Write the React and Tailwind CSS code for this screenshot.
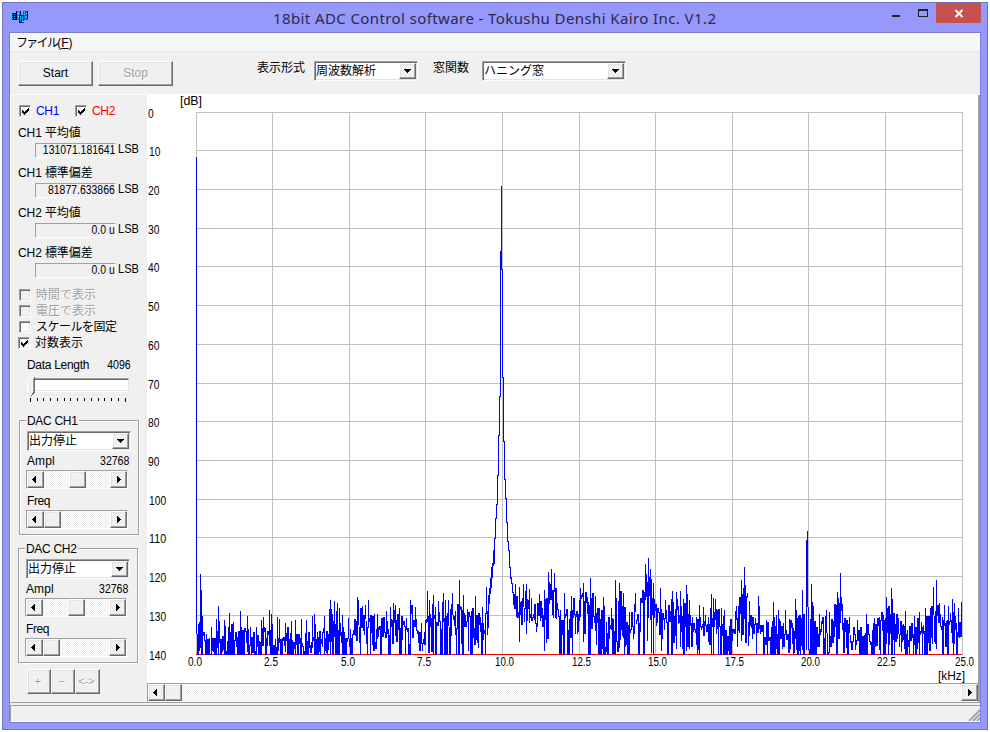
import React from "react";

const H_LINES = [112, 150, 189, 228, 266, 305, 344, 383, 421, 460, 499, 537, 576, 615, 654];
const V_LINES = [196, 272, 349, 425, 502, 579, 655, 732, 808, 885, 962];

// Local maxima of the spectrum: [x, y]
const PEAKS = [
  [198, 624], [200, 574], [202, 616], [206, 634], [211, 627], [216, 619], [218, 606], [224, 620], [229, 613], [233, 622], [240, 611], [247, 616],
  [250, 627], [256, 627], [261, 620], [263, 617], [269, 610], [271, 614], [277, 617], [279, 619], [285, 623], [291, 621], [295, 620], [301, 619], [306, 620],
  [312, 616], [314, 614], [324, 616], [330, 600], [334, 601], [337, 603], [339, 608], [342, 615], [348, 618], [357, 597], [358, 600], [362, 606],
  [365, 605], [368, 600], [374, 614], [377, 614], [386, 611], [390, 607], [393, 603], [395, 605], [399, 608], [410, 600], [415, 607], [421, 623],
  [427, 591], [429, 600], [433, 595], [443, 593], [445, 600], [448, 600], [452, 593], [459, 580], [463, 595], [475, 596], [482, 607], [486, 587],
  [515, 584], [519, 587], [523, 584], [526, 584], [529, 589], [539, 594], [544, 590], [548, 572], [551, 569], [554, 573], [556, 588], [564, 593],
  [571, 596], [580, 588], [583, 583], [590, 578], [595, 596], [603, 597], [611, 608], [615, 580], [619, 583], [623, 593], [629, 612], [635, 593],
  [642, 590], [645, 564], [648, 558], [650, 569], [653, 583], [660, 588], [665, 600], [672, 591], [676, 592], [680, 591], [686, 585], [689, 600],
  [696, 617], [699, 605], [703, 607], [711, 594], [713, 598], [715, 599], [721, 608], [724, 610], [736, 606], [741, 580], [744, 567], [747, 593],
  [749, 601], [758, 596], [766, 620], [773, 602], [778, 610], [785, 610], [789, 619], [795, 599], [802, 590], [811, 584], [813, 606],
  [819, 614], [826, 610], [829, 612], [837, 592], [840, 573], [842, 604], [849, 617], [857, 620], [866, 614], [874, 618], [886, 597], [891, 588],
  [898, 618], [905, 611], [914, 616], [919, 612], [925, 608], [933, 587], [936, 580], [939, 603], [944, 605], [948, 606], [952, 599], [954, 603],
  [958, 608], [961, 602],
];

// Mean noise level
const LEVEL = [
  [196, 636], [220, 642], [260, 638], [290, 642], [320, 638], [335, 622], [350, 634], [360, 618], [400, 624], [430, 612], [450, 618], [480, 624],
  [515, 602], [530, 602], [550, 592], [565, 618], [590, 608], [605, 632], [630, 624], [648, 590], [665, 615], [700, 632], [715, 615], [728, 636],
  [743, 593], [755, 628], [800, 634], [822, 636], [840, 605], [860, 638], [890, 622], [915, 634], [936, 612], [961, 620],
];

// Columns of the carrier and its skirts: [x, top, bottom]
const CARRIER = [
  [488, 595, 627], [489, 588, 603], [490, 578, 593], [491, 567, 587], [492, 563, 577], [493, 550, 565], [494, 538, 563], [495, 518, 538],
  [496, 504, 518], [497, 475, 504], [498, 435, 475], [499, 396, 435], [500, 251, 396], [501, 186, 269], [502, 269, 377], [503, 377, 441],
  [504, 441, 479], [505, 479, 498], [506, 498, 522], [507, 522, 541], [508, 541, 550], [509, 550, 567], [510, 567, 578], [511, 577, 583],
  [512, 583, 592], [513, 592, 604], [514, 594, 608],
];

function interpolate(table, x) {
  for (let i = 1; i < table.length; i++) {
    if (x <= table[i][0]) {
      const [x0, y0] = table[i - 1];
      const [x1, y1] = table[i];
      return y0 + ((y1 - y0) * (x - x0)) / (x1 - x0);
    }
  }
  return table[table.length - 1][1];
}

function buildTrace() {
  let seed = 90210;
  const rnd = () => {
    seed = (seed * 1664525 + 1013904223) % 4294967296;
    return (seed + 1) / 4294967297;
  };
  const peaks = new Map(PEAKS);
  const carrier = new Map(CARRIER.map((c) => [c[0], c]));
  let last = 634;
  let d = "M196 157V634";
  for (let x = 197; x <= 961; x++) {
    if (carrier.has(x)) {
      const [, t, b] = carrier.get(x);
      d += `M${x} ${t}V${b + 1}`;
      last = b;
      continue;
    }
    if (x === 806 || x === 807) {
      d += `M${x} ${x === 807 ? 531 : 540}V${x === 807 ? 607 : 650}`;
      last = 607;
      continue;
    }
    const level = interpolate(LEVEL, x);
    const cap = interpolate(PEAKS, x) + 4 + 24 * rnd();
    let top = last;
    let bottom = last;
    let v = last;
    for (let i = 0; i < 2; i++) {
      v = level - 6 - 19 * Math.log(-Math.log(rnd()));
      v = Math.min(654, Math.max(cap, v));
      top = Math.min(top, v);
      bottom = Math.max(bottom, v);
    }
    if (peaks.has(x)) {
      top = peaks.get(x);
      v = Math.min(650, top + 8 + 22 * rnd());
    }
    top = Math.round(top);
    bottom = Math.round(Math.max(bottom, top + 3));
    d += `M${x} ${top}V${Math.min(655, bottom + 1)}`;
    last = v;
  }
  return d;
}

const TRACE = buildTrace();

const X_LABELS = [
  ["0.0", 188, 14], ["2.5", 264, 14], ["5.0", 341, 14], ["7.5", 417, 14], ["10.0", 495, 19], ["12.5", 572, 19],
  ["15.0", 648, 19], ["17.5", 725, 19], ["20.0", 801, 19], ["22.5", 877, 19], ["25.0", 955, 19],
];
const Y_LABEL_Y = [118, 156, 195, 234, 272, 311, 350, 389, 427, 466, 505, 543, 582, 621, 660];

function Chart() {
  return (
    <svg width="831" height="588" viewBox="147 95 831 588" className="block shrink-0 bg-white" fontFamily="'Liberation Sans',sans-serif" fontSize="12">
      <g stroke="#c0c0c0" strokeWidth="1" shapeRendering="crispEdges">
        {H_LINES.map((y) => <path key={y} d={`M196 ${y + 0.5}H963`} />)}
        {V_LINES.map((x) => <path key={x} d={`M${x + 0.5} 112V654`} />)}
      </g>
      <path d="M196 654.5H962" stroke="#ff0000" shapeRendering="crispEdges" />
      <path d={TRACE} transform="translate(0.5 0)" stroke="#0000ff" strokeWidth="1" fill="none" shapeRendering="crispEdges" />
      {Y_LABEL_Y.map((y, i) => {
        const s = String(i * 10);
        return <text key={y} x={i > 9 || i === 1 ? 149 : 148} y={y} textLength={s.length * 5.7} lengthAdjust="spacingAndGlyphs">{s}</text>;
      })}
      {X_LABELS.map(([s, x, w]) => <text key={s} x={x} y="666" textLength={w} lengthAdjust="spacingAndGlyphs">{s}</text>)}
      <text x="180" y="105" textLength="22" lengthAdjust="spacingAndGlyphs">[dB]</text>
      <text x="938" y="680" textLength="27" lengthAdjust="spacingAndGlyphs">[kHz]</text>
    </svg>
  );
}

const RAISED = "bg-[#f0f0f0] border border-t-white border-l-white border-r-[#696969] border-b-[#696969] shadow-[inset_-1px_-1px_0_#a0a0a0,inset_1px_1px_0_#e3e3e3]";
const SUNKEN = "bg-white border border-t-[#a0a0a0] border-l-[#a0a0a0] border-r-white border-b-white shadow-[inset_1px_1px_0_#696969,inset_-1px_-1px_0_#e3e3e3]";
const DITHER = "bg-[repeating-conic-gradient(#ffffff_0_25%,#ececec_0_50%)] bg-[length:2px_2px]";

function Arrow({ dir }) {
  const d = {
    left: "M3 0h1v7h-1v-1h-1v-1h-1v-1h-1v-1h1v-1h1v-1h1z",
    right: "M0 0h1v1h1v1h1v1h1v1h-1v1h-1v1h-1v1h-1z",
    down: "M0 0h7v1h-1v1h-1v1h-1v1h-1v-1h-1v-1h-1v-1h-1z",
  }[dir];
  const down = dir === "down";
  return (
    <svg width={down ? 7 : 4} height={down ? 4 : 7} className="block" shapeRendering="crispEdges">
      <path d={d} fill="#000" />
    </svg>
  );
}

function ScrollButton({ dir }) {
  return (
    <div className={`flex h-[17px] w-[17px] shrink-0 items-center ${dir === "left" ? "pl-[4px]" : "pl-[6px]"} ${RAISED}`}>
      {dir && <Arrow dir={dir} />}
    </div>
  );
}

function Combo({ text, className }) {
  return (
    <div className={`flex h-[20px] items-center py-[2px] pl-[1px] pr-[1px] ${SUNKEN} ${className}`}>
      <span className="flex-1 whitespace-nowrap leading-[14px]">{text}</span>
      <div className={`flex h-[16px] w-[17px] items-center justify-center pb-px ${RAISED}`}><Arrow dir="down" /></div>
    </div>
  );
}

function Check({ label, checked, disabled, className = "" }) {
  return (
    <div className={`flex h-[16px] items-center ${className}`}>
      <div className={`h-[12px] w-[12px] shrink-0 ${SUNKEN} ${disabled ? "bg-[#f0f0f0]!" : ""}`}>
        {checked && (
          <svg width="10" height="10" className="block" shapeRendering="crispEdges">
            <path d="M2 4h1v1h1v1h1v-1h1v-1h1v-1h1v-1h1v3h-1v1h-1v1h-1v1h-1v1h-1v-1h-1v-1h-1z" fill="#000" />
          </svg>
        )}
      </div>
      <span className={`ml-[5px] whitespace-nowrap ${disabled ? "text-[#a0a0a0] [text-shadow:1px_1px_0_#fff]" : ""}`}>{label}</span>
    </div>
  );
}

function Stat({ label, value }) {
  return (
    <div className="h-[40px]">
      <div className="h-[20px] whitespace-nowrap pl-[7px] leading-[21px] tracking-[-0.1px]">{label}</div>
      <div className="flex h-[15px] pl-[24px]">
        <div className="flex h-[15px] w-[81px] items-center justify-end border border-t-[#a0a0a0] border-l-[#a0a0a0] border-r-white border-b-white">
          <span className="inline-block origin-right scale-x-[0.87] whitespace-nowrap leading-[13px]">{value}</span>
        </div>
        <span className="ml-[2px] inline-block origin-left scale-x-[0.92] leading-[12px]">LSB</span>
      </div>
    </div>
  );
}

function HScroll({ gap }) {
  return (
    <div className={`flex h-[19px] w-[102px] border border-t-[#a0a0a0] border-l-[#a0a0a0] border-r-white border-b-white ${DITHER}`}>
      <ScrollButton dir="left" />
      <div className={`${gap ? "w-[25px]" : "w-0"} shrink-0`} />
      <ScrollButton />
      <div className="flex-1" />
      <ScrollButton dir="right" />
    </div>
  );
}

function Dac({ title, className }) {
  return (
    <fieldset className={`w-[120px] ${className}`}>
      <div className="h-[115px] border border-[#a0a0a0] pl-[6px] shadow-[1px_1px_0_#fff,inset_1px_1px_0_#fff]">
        <div className="-mt-[8px] flex h-[15px]">
          <span className="bg-[#f0f0f0] px-px leading-[17px] tracking-[-0.3px]">{title}</span>
        </div>
        <Combo text="出力停止" className="ml-px mt-[3px] w-[104px]" />
        <div className="flex h-[19px] w-[103px] items-center justify-between pl-px">
          <span className="tracking-[0.1px]">Ampl</span>
          <span className="inline-block origin-right scale-x-[0.88]">32768</span>
        </div>
        <HScroll gap />
        <div className="flex h-[21px] items-center pl-px pt-[2px]"><span className="tracking-[-0.4px]">Freq</span></div>
        <HScroll />
      </div>
    </fieldset>
  );
}

function Slider() {
  return (
    <svg width="108" height="28" viewBox="0 0 108 28" className="block" shapeRendering="crispEdges">
      <rect x="6" y="2" width="97" height="14" fill="#fff" />
      <path d="M6 2.5H103" stroke="#a0a0a0" />
      <path d="M6 3.5H102" stroke="#696969" />
      <path d="M102.5 3V15M7 14.5H103" stroke="#e3e3e3" />
      <path d="M1 1H9V16L5 20L1 16Z" fill="#f0f0f0" />
      <path d="M1.5 17V1.5H8" stroke="#fff" fill="none" />
      <path d="M7.5 2V16" stroke="#a0a0a0" />
      <path d="M8.5 1V16L5 20" stroke="#696969" fill="none" />
      {[4, 11, 17, 24, 31, 38, 44, 51, 58, 65, 72, 78, 85, 92, 99].map((x, i) => (
        <rect key={x} x={x} y="22" width="1" height={i === 0 || i === 14 ? 4 : 3} fill="#000" />
      ))}
    </svg>
  );
}

function SidePanel() {
  return (
    <div className="h-[607px] w-[136px] shrink-0 bg-[#f0f0f0]">
      <div className="flex h-[28px] pl-[8px] pt-[8px]">
        <Check checked label={<span className="tracking-[-0.3px] text-[#0000ff]">CH1</span>} className="w-[56px]" />
        <Check checked label={<span className="tracking-[-0.3px] text-[#ff0000]">CH2</span>} />
      </div>
      <Stat label="CH1 平均値" value="131071.181641" />
      <Stat label="CH1 標準偏差" value="81877.633866" />
      <Stat label="CH2 平均値" value="0.0 u" />
      <Stat label="CH2 標準偏差" value="0.0 u" />
      <div className="mt-[4px] pl-[8px]">
        <Check disabled label="時間で表示" />
        <Check disabled label="電圧で表示" />
        <Check label={<span className="tracking-[-0.5px]">スケールを固定</span>} />
        <Check checked label="対数表示" className="-ml-px" />
      </div>
      <div className="flex h-[25px] w-[120px] items-center justify-between pl-[16px] pt-[3px]">
        <span className="whitespace-nowrap tracking-[-0.3px]">Data Length</span>
        <span className="inline-block origin-right scale-x-[0.88]">4096</span>
      </div>
      <div className="h-[44px] pl-[15px]"><Slider /></div>
      <Dac title="DAC CH1" className="ml-[8px]" />
      <Dac title="DAC CH2" className="ml-[7px] mt-[13px]" />
      <div className="ml-[16px] mt-[6px] flex text-[#a0a0a0] [text-shadow:1px_1px_0_#fff]">
        <div className={`flex h-[25px] w-[24px] items-center justify-center pb-[2px] pr-[2px] ${RAISED} text-[11px]`}>+</div>
        <div className={`flex h-[25px] w-[24px] items-center justify-center pb-[2px] pr-[2px] ${RAISED} text-[11px]`}>−</div>
        <div className={`flex h-[25px] w-[25px] items-center justify-center pb-[2px] pr-[2px] ${RAISED} text-[11px]`}>&lt;-&gt;</div>
      </div>
    </div>
  );
}

function TitleBar() {
  return (
    <div className="flex h-[29px] items-start pl-[8px]">
      <svg width="18" height="16" viewBox="0 0 18 16" className="mt-[6px] block" shapeRendering="crispEdges">
        <path d="M1 4h4v7h-4z" fill="#000090" />
        <path d="M1 5h1v1h-1zM3 5h1v1h-1zM1 7h1v1h-1zM3 7h1v1h-1zM1 9h1v1h-1zM3 9h1v1h-1z" fill="#20a8ff" />
        <path d="M5 2h5v9h-5z" fill="#00a0f0" />
        <path d="M5 2h1v9h-1zM9 2h1v8h-1z" fill="#000070" />
        <path d="M7 4h1v1h-1zM7 7h1v1h-1z" fill="#f0e840" />
        <path d="M12 2h5v9h-5z" fill="#0060e8" />
        <path d="M13 3h1v1h-1zM13 5h1v1h-1zM15 7h1v1h-1z" fill="#60e0ff" />
        <path d="M15 4h1v1h-1zM14 8h1v1h-1z" fill="#f0e840" />
        <path d="M16 2h1v7h-1z" fill="#000070" />
        <path d="M8 6h5v8h-5z" fill="#0020a0" />
        <path d="M9 7h1v5h-1zM11 7h1v5h-1z" fill="#00a8f8" />
        <path d="M11 12h2v1h-2z" fill="#d8e040" />
      </svg>
      <div className="flex-1 pl-[244px] pt-[4px] font-['Noto_Sans','Open_Sans',sans-serif] text-[15px] leading-[22px] text-[#2b2b48]">
        <span className="whitespace-nowrap tracking-[0.4px]">18bit ADC Control software - Tokushu Denshi Kairo Inc. V1.2</span>
      </div>
      <svg width="98" height="20" viewBox="889 3 98 20" className="block shrink-0" shapeRendering="crispEdges">
        <rect x="892" y="15" width="8" height="2" fill="#222" />
        <path d="M918 9h10v8h-10zM919 11v5h8v-5z" fillRule="evenodd" fill="#222" />
        <rect x="936" y="3" width="45" height="20" fill="#c75050" />
        <path d="M955.5 10L962.5 17M962.5 10L955.5 17" stroke="#fff" strokeWidth="2" shapeRendering="auto" />
      </svg>
    </div>
  );
}

export default function App() {
  return (
    <div className="h-[732px] w-[990px] overflow-hidden bg-white pl-[2px] pt-[2px] font-['Liberation_Sans','Noto_Sans_CJK_JP',sans-serif] text-[12px] leading-[16px] text-black">
      <div className="h-[728px] w-[986px] border border-[#7072bc] bg-[#9698fb]">
        <TitleBar />
        <div className="ml-[6px] flex h-[691px] w-[972px] flex-col border border-[#7b7dcf] bg-[#f0f0f0]">
          <div className="flex h-[19px] shrink-0 items-center border-b border-[#e6e7ea] bg-[#f5f6f8] pl-[6px] pt-[2px]">
            <span className="tracking-[-1.7px]">ファイル</span><span className="text-[12px]">(<u>F</u>)</span>
          </div>
          <div className="flex h-[42px] shrink-0 pl-[8px] pt-[9px]">
            <div className={`flex h-[25px] w-[75px] items-center justify-center pb-[2px] ${RAISED}`}>Start</div>
            <div className={`ml-[5px] flex h-[25px] w-[75px] items-center justify-center pb-[2px] ${RAISED} text-[#a0a0a0] [text-shadow:1px_1px_0_#fff]`}>Stop</div>
            <span className="ml-[84px] -mt-px w-[57px]">表示形式</span>
            <Combo text="周波数解析" className="w-[104px]" />
            <span className="ml-[15px] -mt-px w-[49px]">窓関数</span>
            <Combo text="ハニング窓" className="w-[144px]" />
          </div>
          <div className="flex h-[608px] shrink-0 border-l border-t border-white">
            <SidePanel />
            <div className="flex w-[831px] shrink-0 flex-col">
              <Chart />
              <div className={`flex h-[19px] border-t border-l border-[#a0a0a0] ${DITHER}`}>
                <ScrollButton dir="left" />
                <ScrollButton />
                <div className="flex-1" />
                <ScrollButton dir="right" />
              </div>
            </div>
            <div className="flex-1 bg-[#a0a0a0]" />
          </div>
          <div className="h-[4px] shrink-0 border-b border-t border-[#a0a0a0] bg-[#f0f0f0]" />
          <div className="flex flex-1 items-end justify-end border-b border-l border-b-white border-l-[#a0a0a0]">
            <svg width="12" height="12" className="block">
              <path d="M1 12L12 1M5 12L12 5M9 12L12 9" stroke="#a0a0a0" strokeWidth="1.8" />
            </svg>
          </div>
        </div>
      </div>
    </div>
  );
}
